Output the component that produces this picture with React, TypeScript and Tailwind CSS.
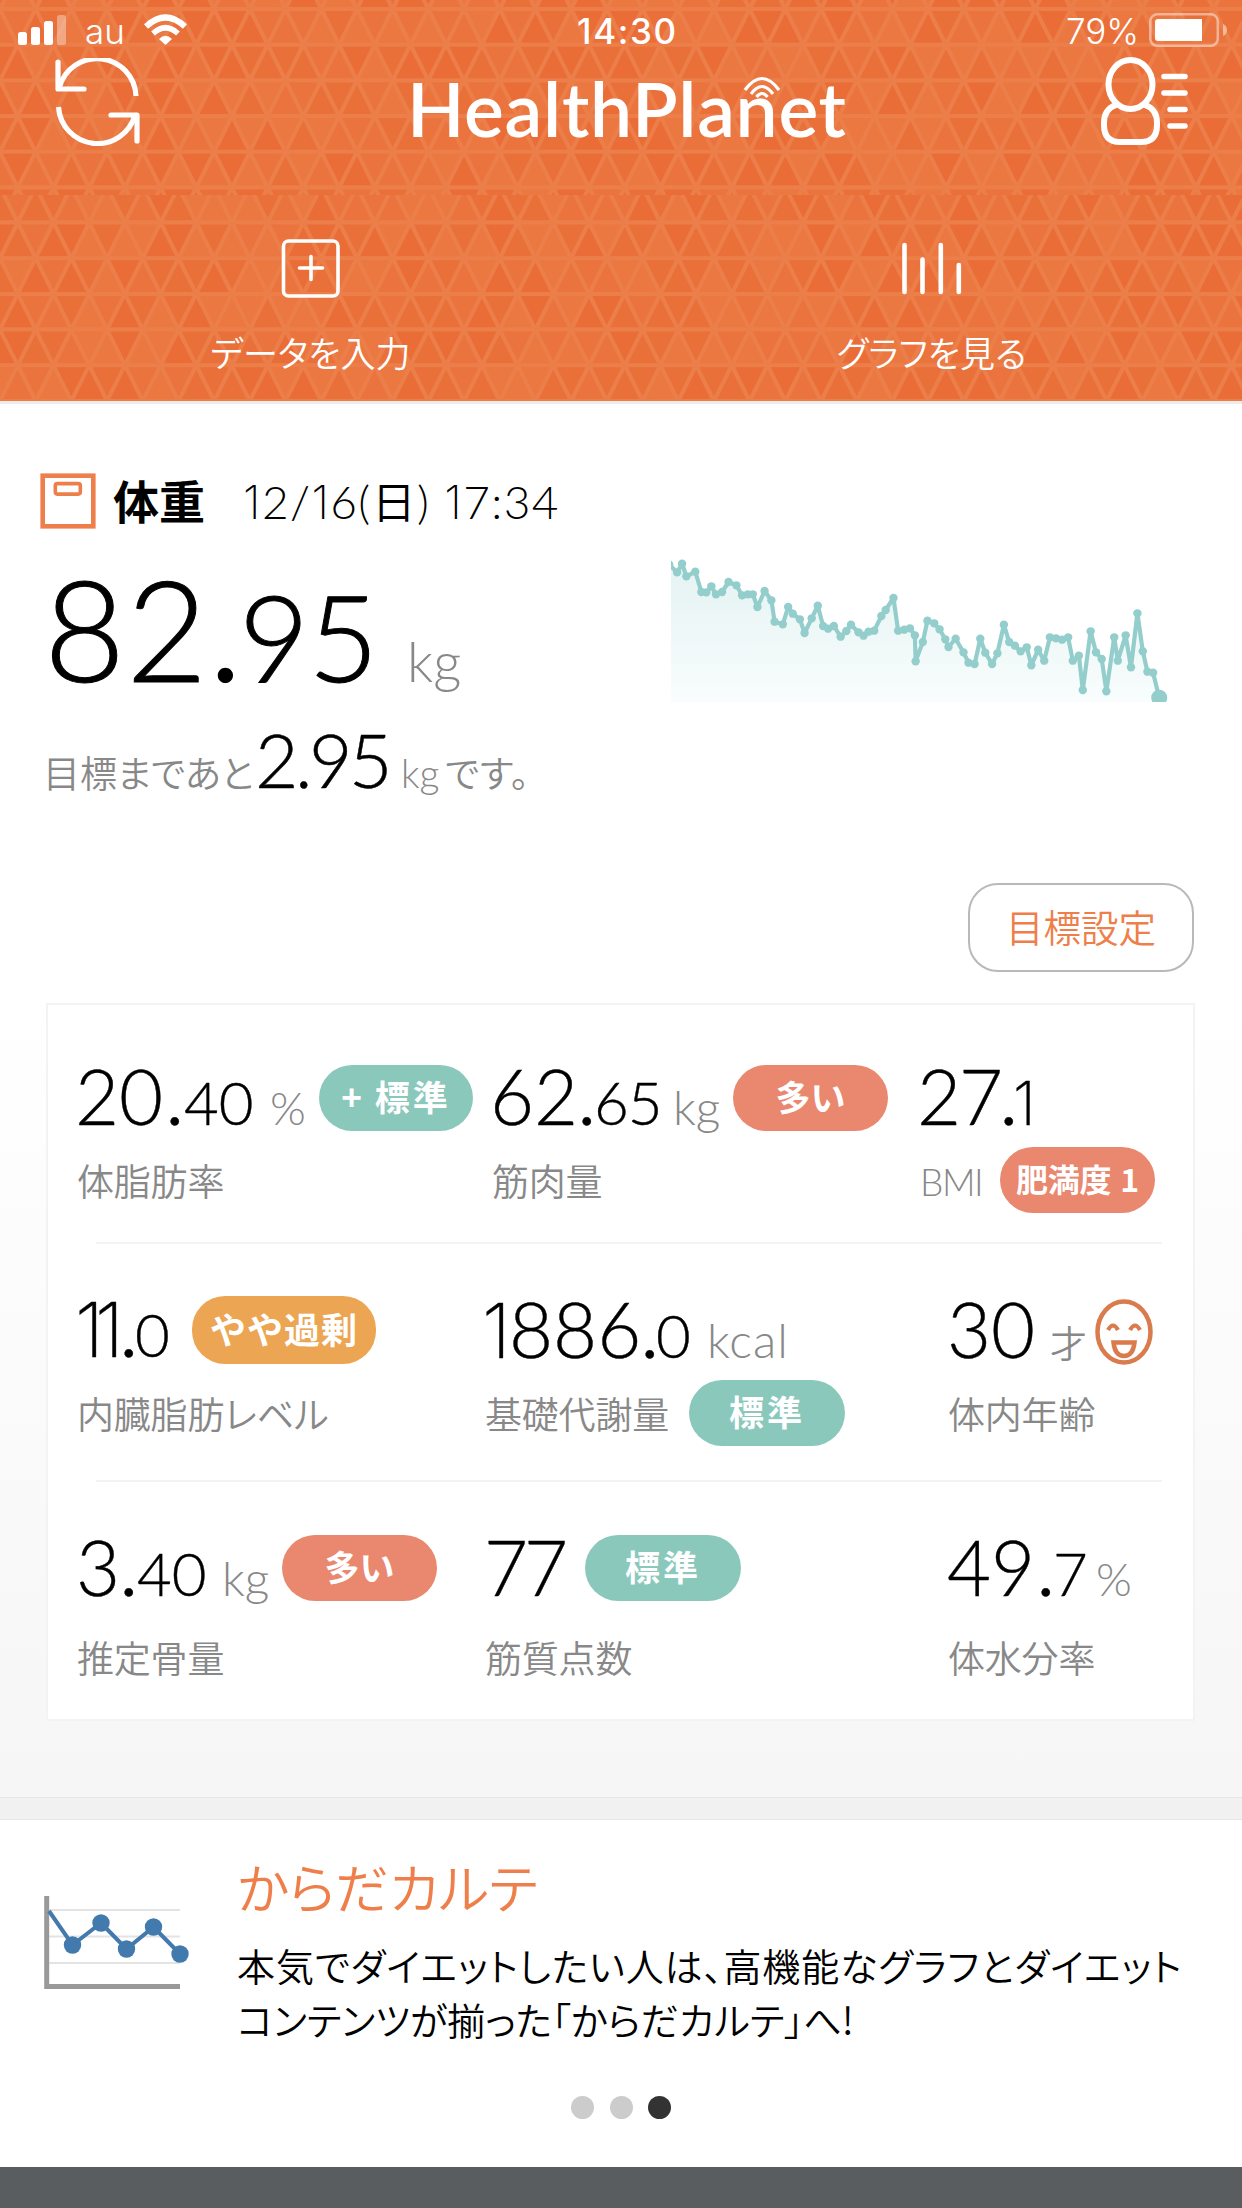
import React from "react";

const JP = "font-['Noto_Sans_CJK_JP',sans-serif]";

function Triangles({ height, first, odd, seed }: { height: number; first: number; odd: boolean; seed: number }) {
  const P = 35.7;
  const tones = ["#ea6c36", "#ea703a", "#ea733e", "#eb7741"];
  const shapes: React.ReactNode[] = [];
  for (let r = -1; r < 7; r++) {
    const y0 = first + r * P;
    const off = (r % 2 !== 0) !== odd ? P / 2 : 0;
    for (let c = -1; c < 36; c++) {
      const x = c * P + off;
      const pick = (n: number) => {
        const v = Math.sin((r + 3) * 127.1 + c * 311.7 + n * 74.7 + seed * 19.3) * 43758.5453;
        return tones[Math.floor((v - Math.floor(v)) * 4)];
      };
      shapes.push(
        <polygon key={`u${r}_${c}`} points={`${x},${y0} ${x - P / 2},${y0 + P} ${x + P / 2},${y0 + P}`} fill={pick(0)} />,
        <polygon key={`d${r}_${c}`} points={`${x},${y0} ${x + P},${y0} ${x + P / 2},${y0 + P}`} fill={pick(1)} />,
      );
    }
  }
  return (
    <svg className="block w-full" width="1242" height={height} viewBox={`0 0 1242 ${height}`}>
      <g stroke="#ec7e4a" strokeWidth="4">{shapes}</g>
    </svg>
  );
}

function StatusBar() {
  return (
    <div className="flex h-[59px] items-start text-white">
      <svg className="ml-[18px] mt-[15px]" width="49" height="30" fill="#fff">
        <rect x="0" y="17" width="9" height="13" rx="2.5" />
        <rect x="13" y="12" width="9" height="18" rx="2.5" />
        <rect x="26" y="6" width="9" height="24" rx="2.5" />
        <rect x="39" y="0" width="9" height="30" rx="2.5" opacity=".35" />
      </svg>
      <span className="ml-[18px] mt-[12px] w-[42px] text-[35px] leading-[38px] font-['Inter',sans-serif] font-light">au</span>
      <svg className="ml-[17px] mt-[14px]" width="43" height="31" fill="none" stroke="#fff">
        <path d="M2 12.5 Q21.500 -5.500 41 12.500" strokeWidth="6" />
        <path d="M9 19.500 Q21.500 8 34 19.500" strokeWidth="5.500" />
        <path d="M15 25 Q21.500 18.500 28 25 L21.500 31 Z" fill="#fff" stroke="none" />
      </svg>
      <span className="ml-[390px] mt-[12px] w-[101px] text-[35px] leading-[38px] tracking-[1.600px] font-['Inter',sans-serif] font-medium">14:30</span>
      <span className="ml-[388px] mt-[12px] w-[75px] text-[35px] leading-[38px] font-['Inter',sans-serif] font-light">79%</span>
      <svg className="ml-[8px] mt-[13px]" width="80" height="34">
        <rect x="1.300" y="1.300" width="67.500" height="31.500" rx="7" fill="none" stroke="#fff" strokeWidth="2.600" opacity=".45" />
        <path d="M9 6 H53 V28 H9 Q6 28 6 25 V9 Q6 6 9 6Z" fill="#fff" />
        <path d="M74 11 Q78 12.500 78 17 Q78 21.500 74 23Z" fill="#fff" opacity=".45" />
      </svg>
    </div>
  );
}

function Header() {
  return (
    <header className="relative h-[404px] overflow-hidden border-b-[3px] border-[#ececec] bg-[#ea703a]">
      <div className="absolute inset-0">
        <Triangles height={195} first={9} odd={false} seed={1} />
        <Triangles height={207} first={27.5} odd seed={5} />
      </div>
      <div className="relative">
        <StatusBar />
        <div className="flex h-[136px] items-start">
          <svg className="ml-[54px] -mt-px" width="88" height="88" fill="none" stroke="#fff" strokeWidth="5.200" strokeLinecap="round" strokeLinejoin="round">
            <path d="M4 4 V31 H30" />
            <path d="M5.500 29 A39 39 0 0 1 82 38" strokeLinecap="butt" />
            <path d="M83 83 V57 H57" />
            <path d="M81 57 A39 39 0 0 1 4.500 49" strokeLinecap="butt" />
          </svg>
          <div className="relative ml-[265px] mt-[4px] w-[440px] whitespace-nowrap text-[75px] leading-[90px] tracking-[0.700px] text-white font-['Lato',sans-serif] font-semibold">
            HealthPlanet
            <svg className="absolute left-[336px] top-[13px]" width="38" height="24" fill="none" stroke="#fff" strokeWidth="3.200">
              <path d="M2 14 Q19 -9 36 14" />
              <path d="M8 18 Q19 3 30 18" />
              <path d="M13.500 21 Q19 14 24.500 21" />
            </svg>
          </div>
          <svg className="ml-[253px] -mt-[2px]" width="90" height="90" fill="none" stroke="#fff" strokeWidth="6" strokeLinecap="round">
            <ellipse cx="30.500" cy="27.500" rx="22" ry="24.500" />
            <path d="M16 48 Q4 52 4 66 V68 Q4 85 20 85 H41 Q57 85 57 68 V66 Q57 52 45 48" />
            <path d="M64 19.500 H85 M64 36 H85 M70 52.500 H85 M70 69 H85" strokeWidth="5.500" />
          </svg>
        </div>
        <div className={`grid grid-cols-2 text-white ${JP}`}>
          <div className="flex flex-col items-center">
            <svg className="mt-[43px]" width="60" height="60" fill="none" stroke="#fff" strokeWidth="3.600" strokeLinecap="round">
              <rect x="2.500" y="3" width="54.500" height="55" rx="5" />
              <path d="M18.500 30 H41.500 M30 18.500 V41.500" />
            </svg>
            <span className="mt-[34px] text-[35px] leading-[40px] font-[350] [font-feature-settings:'palt']">データを入力</span>
          </div>
          <div className="flex flex-col items-center">
            <svg className="mt-[43px]" width="60" height="60" stroke="#fff" strokeWidth="4.600" strokeLinecap="round">
              <path d="M2.500 7 V54 M20.500 21.500 V54 M38.800 7 V54 M56.800 27 V54" />
            </svg>
            <span className="mt-[34px] text-[35px] leading-[40px] font-[350] [font-feature-settings:'palt']">グラフを見る</span>
          </div>
        </div>
      </div>
    </header>
  );
}

const trend: [number, number][] = [
  [82, 103], [104, 126], [118, 100], [130, 138], [155, 124], [172, 185], [186, 186], [200, 168], [213, 192], [230, 185],
  [248, 155], [270, 165], [286, 195], [302, 192], [316, 192], [329, 230], [349, 182], [368, 210], [377, 274], [400, 282],
  [415, 230], [428, 250], [448, 267], [461, 308], [481, 264], [498, 226], [513, 287], [527, 295], [543, 287], [562, 319],
  [578, 302], [591, 283], [612, 306], [626, 316], [640, 304], [656, 301], [676, 257], [688, 239], [710, 203], [723, 301],
  [740, 298], [756, 294], [770, 315], [772, 393], [792, 335], [805, 271], [824, 279], [839, 297], [855, 327], [864, 350],
  [884, 325], [906, 366], [920, 397], [937, 401], [953, 325], [967, 367], [986, 401], [1001, 369], [1019, 283], [1034, 335],
  [1050, 346], [1066, 363], [1083, 351], [1096, 405], [1115, 358], [1132, 391], [1148, 321], [1165, 324], [1182, 328], [1199, 321],
  [1212, 391], [1229, 376], [1240, 479], [1262, 303], [1277, 366], [1293, 386], [1306, 483], [1328, 321], [1338, 391], [1360, 315],
  [1375, 411], [1393, 249], [1408, 363], [1421, 424], [1437, 427], [1454, 502],
];

function TrendChart() {
  const pts = trend.map(([x, y]) => [(x - 87) / 2.8, (y - 80) / 3] as const);
  const line = pts.map(([x, y]) => `${x.toFixed(1)},${y.toFixed(1)}`).join(" ");
  const last = pts[pts.length - 1];
  return (
    <svg className="block" width="498" height="145" viewBox="0 0 498 145">
      <defs>
        <linearGradient id="area" x1="0" y1="0" x2="0" y2="1">
          <stop offset="0" stopColor="#e4f3f2" />
          <stop offset="1" stopColor="#f9fdfd" />
        </linearGradient>
      </defs>
      <polygon points={`-2,146 ${line} ${last[0]},146`} fill="url(#area)" />
      <polyline points={line} fill="none" stroke="#93cecc" strokeWidth="4.200" strokeLinejoin="round" />
      {pts.map(([x, y], i) => (
        <circle key={i} cx={x} cy={y} r={i === pts.length - 1 ? 8 : 4.2} fill="#93cecc" />
      ))}
    </svg>
  );
}

/** Footless numeral one, set in a narrow cell. */
function One({ className = "", children = "1" }: { className?: string; children?: React.ReactNode }) {
  return <span className={`inline-block shrink-0 font-['Inter',sans-serif] font-extralight ${className}`}>{children}</span>;
}

function Dot({ className }: { className: string }) {
  return <span className={`text-[66px] font-normal ${className}`}>.</span>;
}

function WeightPanel() {
  return (
    <section className="flex h-[599px] flex-col">
      <div className="flex h-[136px] items-start pt-[69px]">
        <svg className="ml-[40px]" width="56" height="56" fill="none" stroke="#ee7f4a">
          <rect x="2.700" y="2.700" width="50.600" height="50.600" strokeWidth="4.600" />
          <rect x="15.300" y="10.600" width="25" height="10.500" rx="2" strokeWidth="3.600" />
        </svg>
        <h1 className={`ml-[17px] w-[94px] whitespace-nowrap text-[46px] leading-[46px] mt-[3px] font-bold text-black ${JP}`}>体重</h1>
        <div className="ml-[36px] mt-[6px] whitespace-nowrap text-[46px] leading-[46px] tracking-[1.400px] text-black font-['Lato','Noto_Sans_CJK_JP',sans-serif] font-light">
          <One />2/<One />6(<span className="text-[44px] font-[350]">日</span>) <One />7:34
        </div>
      </div>
      <div className="flex items-start">
        <div className="w-[671px]">
          <div className="flex h-[175px] items-baseline whitespace-nowrap pl-[44px] pt-[18px] text-black font-['Lato',sans-serif] font-light leading-none">
            <span className="w-[167px] text-[140px] tracking-[1px] [-webkit-text-stroke:1px_#000]">82</span>
            <span className="w-[28px] text-[122px] font-normal">.</span>
            <span className="w-[168px] text-[121px] tracking-[-1px] [-webkit-text-stroke:1px_#000]">95</span>
            <span className="text-[55px] text-[#888]">kg</span>
          </div>
          <div className="flex items-baseline whitespace-nowrap pl-[43px] pt-[7px] text-[#888] leading-none font-light">
            <span className={`w-[212px] text-[37px] font-[350] [font-feature-settings:'palt'] ${JP}`}>目標まであと</span>
            <span className="w-[146px] text-[75px] tracking-[-3.500px] text-black font-['Lato',sans-serif] [-webkit-text-stroke:0.500px_#000]">2.95</span>
            <span className="w-[44px] text-[39px] font-['Lato',sans-serif]">kg</span>
            <span className={`text-[37px] font-[350] tracking-[0.800px] [font-feature-settings:'palt'] ${JP}`}>です。</span>
          </div>
        </div>
        <div className="mt-[17px]">
          <TrendChart />
        </div>
      </div>
      <button className={`ml-[968px] mt-auto mb-[31px] h-[89px] w-[226px] shrink-0 rounded-[30px] border-2 border-[#b9b9b9] bg-white pb-[3px] text-[37.500px] font-[350] text-[#ee7f4a] ${JP}`}>
        目標設定
      </button>
    </section>
  );
}

function Badge({ className, children }: { className: string; children: React.ReactNode }) {
  return (
    <span className={`flex h-[66px] shrink-0 items-center justify-center self-start whitespace-nowrap rounded-[33px] pb-[5px] text-[35px] leading-none font-bold text-white [-webkit-text-stroke:0] ${JP} ${className}`}>
      {children}
    </span>
  );
}

function Row({ className, children }: { className: string; children: React.ReactNode }) {
  return <div className={`grid grid-cols-[408px_458px_1fr] whitespace-nowrap ${className}`}>{children}</div>;
}

function Value({ className, children }: { className: string; children: React.ReactNode }) {
  return (
    <div className={`flex h-[98px] items-baseline pt-[11px] text-[76px] leading-none text-black [-webkit-text-stroke:0.400px] font-['Lato','Noto_Sans_CJK_JP',sans-serif] font-light *:shrink-0 ${className}`}>
      {children}
    </div>
  );
}

function Unit({ className, children }: { className: string; children: React.ReactNode }) {
  return <span className={`text-[#888] [-webkit-text-stroke:0] ${className}`}>{children}</span>;
}

function Label({ className, children }: { className: string; children: React.ReactNode }) {
  return (
    <div className={`flex items-start text-[37px] leading-[40px] font-[350] tracking-[-0.200px] text-[#888] ${JP} ${className}`}>
      {children}
    </div>
  );
}

function Face() {
  return (
    <svg className="shrink-0 self-start" width="58" height="66" fill="none" stroke="#d97b4d" strokeWidth="4.500">
      <ellipse cx="29" cy="33" rx="26.500" ry="30.500" />
      <path d="M13 31 Q18 22 23 31 M35 31 Q40 22 45 31" strokeWidth="4.200" />
      <path d="M18.500 43.500 H39.500 Q38 57 29 57 Q20 57 18.500 43.500Z" />
    </svg>
  );
}

function Divider() {
  return <hr className="mb-[36px] ml-[48px] mr-[31px] border-t-2 border-[#f3f3f3]" />;
}

function Metrics() {
  return (
    <section className="flex h-[794px] flex-col bg-linear-to-b from-white to-[#f6f6f6]">
      <div className="ml-[46px] h-[718px] w-[1149px] border-2 border-[#f3f3f3] bg-white pt-[42px]">
        <Row className="h-[195px]">
          <div>
            <Value className="pl-[27px]">
              <span className="w-[92px]">20</span>
              <Dot className="w-[17px]" />
              <span className="w-[86px] text-[60px]">40</span>
              <Unit className="w-[49px] text-[46px] tracking-tight">%</Unit>
              <Badge className="mt-[7px] w-[154px] gap-[10px] bg-[#8bc8bc] tracking-[3px]"><span>+</span>標準</Badge>
            </Value>
            <Label className="pl-[29px] pt-[15px]">体脂肪率</Label>
          </div>
          <div>
            <Value className="pl-[34px]">
              <span className="w-[89px]">62</span>
              <Dot className="w-[15px]" />
              <span className="w-[79px] text-[60px] tracking-[-1px]">65</span>
              <Unit className="w-[60px] text-[48px]">kg</Unit>
              <Badge className="mt-[7px] w-[155px] bg-[#e9876f]">多い</Badge>
            </Value>
            <Label className="pl-[36px] pt-[15px]">筋肉量</Label>
          </div>
          <div>
            <Value className="pl-[3px]">
              <span className="w-[84px] tracking-[-2px]">27</span>
              <Dot className="w-[15px]" />
              <One className="-ml-[3px] text-[60px]" />
            </Value>
            <Label className="h-[80px] pl-[6px]">
              <span className="mt-[17px] w-[80px] text-[37px] font-light font-['Lato',sans-serif] tracking-[-1.500px]">BMI</span>
              <Badge className="mt-[2px] w-[155px] gap-[9px] bg-[#e9876f] text-[32px]!">肥満度<span>1</span></Badge>
            </Label>
          </div>
        </Row>
        <Divider />
        <Row className="h-[200px]">
          <div>
            <Value className="pl-[27px]">
              <One className="w-[46px] tracking-[-9px]">11</One>
              <Dot className="w-[14px]" />
              <span className="w-[57px] text-[60px]">0</span>
              <Badge className="mt-[5px] h-[68px]! w-[184px] bg-[#eba553] text-[36px]! tracking-[1px]">やや過剰</Badge>
            </Value>
            <Label className="pl-[29px] pt-[15px] [font-feature-settings:'palt']">内臓脂肪レベル</Label>
          </div>
          <div>
            <Value className="pl-[26px]">
              <One className="w-[27px]" />
              <span className="w-[133px]">886</span>
              <Dot className="w-[14px]" />
              <span className="w-[51px] text-[60px]">0</span>
              <Unit className="text-[48px] tracking-[1px]">kcal</Unit>
            </Value>
            <Label className="h-[80px] pl-[29px]">
              <span className="w-[204px] pt-[15px]">基礎代謝量</span>
              <Badge className="mt-[2px] w-[156px] bg-[#8bc8bc] tracking-[3px]">標準</Badge>
            </Label>
          </div>
          <div>
            <Value className="pl-[33px]">
              <span className="w-[103px]">30</span>
              <Unit className="w-[45px] text-[37px] font-[350]">才</Unit>
              <span className="mt-[8px] self-start leading-none"><Face /></span>
            </Value>
            <Label className="pl-[34px] pt-[15px]">体内年齢</Label>
          </div>
        </Row>
        <Divider />
        <Row className="h-[180px]">
          <div>
            <Value className="pl-[28px]">
              <span className="w-[45px]">3</span>
              <Dot className="w-[16px]" />
              <span className="w-[85px] text-[60px]">40</span>
              <Unit className="w-[60px] text-[48px]">kg</Unit>
              <Badge className="mt-[6px] w-[155px] bg-[#e9876f]">多い</Badge>
            </Value>
            <Label className="pl-[29px] pt-[21px]">推定骨量</Label>
          </div>
          <div>
            <Value className="pl-[28px]">
              <span className="w-[101px] tracking-[-4px]">77</span>
              <Badge className="mt-[6px] w-[156px] bg-[#8bc8bc] tracking-[3px]">標準</Badge>
            </Value>
            <Label className="pl-[29px] pt-[21px]">筋質点数</Label>
          </div>
          <div>
            <Value className="pl-[33px]">
              <span className="w-[91px]">49</span>
              <Dot className="w-[15px]" />
              <span className="w-[43px] text-[60px]">7</span>
              <Unit className="text-[46px]">%</Unit>
            </Value>
            <Label className="pl-[34px] pt-[21px]">体水分率</Label>
          </div>
        </Row>
      </div>
    </section>
  );
}

function Promo() {
  return (
    <section className="h-[347px] bg-white">
      <div className="flex h-[276px] items-start">
        <svg className="ml-[44px] mt-[76px] shrink-0" width="147" height="94" fill="none">
          <path d="M5 14 H136 M5 40.500 H136 M5 67 H136" stroke="#e3e3e3" strokeWidth="2" />
          <path d="M2.700 0 V90.500 H136" stroke="#999" strokeWidth="5" />
          <path d="M5 15 L28.500 49 L57 27 L82.500 53 L109.500 31 L136 58" stroke="#427aad" strokeWidth="4" />
          <g fill="#427aad">
            <circle cx="28.500" cy="49" r="8.700" />
            <circle cx="57" cy="27" r="8.700" />
            <circle cx="82.500" cy="53" r="8.700" />
            <circle cx="109.500" cy="31" r="8.700" />
            <circle cx="136" cy="58" r="8.700" />
          </g>
        </svg>
        <div className={`ml-[46px] [font-feature-settings:'palt'] ${JP}`}>
          <h2 className="mt-[34px] text-[53.500px] leading-[64px] font-[350] text-[#ee7f4a]">からだカルテ</h2>
          <p className="mt-[20px] whitespace-nowrap text-[38px] leading-[54px] font-[350] text-black">
            <span className="tracking-[0.900px]">本気でダイエットしたい人は、高機能なグラフとダイエット</span>
            <br />
            コンテンツが揃った「からだカルテ」へ!
          </p>
        </div>
      </div>
      <div className="flex justify-center gap-[15.500px]">
        <i className="size-[23px] rounded-full bg-[#ccc]" />
        <i className="size-[23px] rounded-full bg-[#ccc]" />
        <i className="size-[23px] rounded-full bg-[#333]" />
      </div>
    </section>
  );
}

export default function App() {
  return (
    <main className="flex h-[2208px] w-[1242px] flex-col overflow-hidden bg-white">
      <Header />
      <WeightPanel />
      <Metrics />
      <div className="h-[23px] border-y border-[#e6e6e6] bg-[#f1f1f1]" />
      <Promo />
      <footer className="flex-1 bg-[#595d5f]" />
    </main>
  );
}
